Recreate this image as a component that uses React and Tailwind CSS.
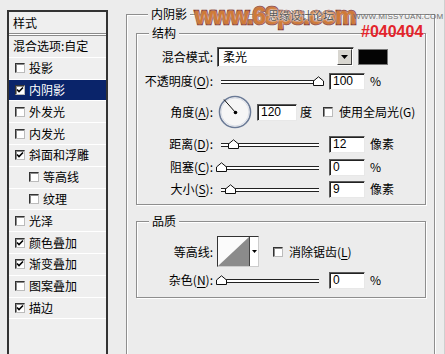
import React from 'react';

const cjk = "font-['Noto_Sans_CJK_SC','Liberation_Sans',sans-serif]";

// 复选框（经典 Windows 风格）
const Check = ({ on }) => (
  <span className="w-[10px] h-[10px] shrink-0 bg-white border border-[#333] border-b-[#bbb] border-r-[#bbb] shadow-[inset_1px_1px_0_#8a8a8a] flex items-center justify-center">
    {on && (
      <svg width="8" height="8" viewBox="0 0 8 8">
        <path d="M1 3.5 L3 5.5 L7 1.5" fill="none" stroke="#000" strokeWidth="1.6" />
      </svg>
    )}
  </span>
);

const styles = [
  { label: '投影', on: false },
  { label: '内阴影', on: true, active: true },
  { label: '外发光', on: false },
  { label: '内发光', on: false },
  { label: '斜面和浮雕', on: true },
  { label: '等高线', on: false, indent: true },
  { label: '纹理', on: false, indent: true },
  { label: '光泽', on: false },
  { label: '颜色叠加', on: true },
  { label: '渐变叠加', on: true },
  { label: '图案叠加', on: false },
  { label: '描边', on: true },
];

const Slider = ({ pos }) => (
  <div className="relative w-[102px] h-[10px] shrink-0">
    <div className="absolute left-[4px] right-0 top-[4px] h-[4px] bg-white border-y border-[#222]" />
    <svg className="absolute top-0" style={{ left: pos - 5 }} width="11" height="10" viewBox="0 0 11 10">
      <path d="M0.5 9.5 V5 L5.5 0.8 L10.5 5 V9.5 Z" fill="#fff" stroke="#111" strokeWidth="1" />
    </svg>
  </div>
);

const Field = ({ value, w = 'w-[36px]' }) => (
  <div className={`${w} h-[17px] shrink-0 bg-white border border-[#5a5a5a] border-b-[#e8e8e8] border-r-[#e8e8e8] shadow-[inset_1px_1px_0_#222] pl-[3px] text-[12px] leading-[15px] font-['Liberation_Sans',sans-serif] text-black`}>
    {value}
  </div>
);

const Label = ({ children }) => (
  <span className={`w-[76px] shrink-0 text-right text-[12px] leading-[14px] text-black ${cjk}`}>{children}</span>
);

const U = ({ children }) => <span className="underline underline-offset-2">{children}</span>;

const SliderRow = ({ label, pos, value, unit, className }) => (
  <div className={`flex items-center h-[18px] ${className}`}>
    <Label>{label}</Label>
    <div className="ml-[4px]">
      <Slider pos={pos} />
    </div>
    <div className="ml-[10px]">
      <Field value={value} />
    </div>
    <span className={`ml-[5px] text-[12px] leading-[14px] ${cjk}`}>{unit}</span>
  </div>
);

const Group = ({ title, className, children }) => (
  <fieldset className={`border border-[#8e8e8e] shadow-[inset_1px_1px_0_#fff,1px_1px_0_#fff] ${className}`}>
    <legend className={`ml-[12px] px-[3px] bg-[#ececec] text-[12px] leading-[14px] text-black ${cjk}`}>{title}</legend>
    {children}
  </fieldset>
);

export default function App() {
  return (
    <div className="relative w-[445px] h-[354px] overflow-hidden bg-[#ececec] flex pt-[7px] pl-[7px] border-r border-[#cfcfcf]">
      {/* 左侧样式列表 */}
      <div className="mt-[3px] w-[101px] h-[360px] shrink-0 border-2 border-[#333] bg-[#efefef] flex flex-col">
        <div className={`h-[21px] pl-[4px] flex items-center text-[12px] ${cjk}`}>样式</div>
        <div className="h-[3px] border-y border-[#8a8a8a] bg-white" />
        <div className={`h-[21.8px] pl-[4px] flex items-center border-b border-white text-[12px] ${cjk}`}>混合选项:自定</div>
        {styles.map((s) => (
          <div
            key={s.label}
            className={`h-[21.8px] flex items-center border-b border-white text-[12px] ${cjk} ${s.indent ? 'pl-[20px]' : 'pl-[6px]'} ${s.active ? 'bg-[#0a246a] text-white' : 'text-black'}`}
          >
            <Check on={s.on} />
            <span className="ml-[4px]">{s.label}</span>
          </div>
        ))}
      </div>

      {/* 右侧设置 */}
      <Group title="内阴影" className="ml-[18px] w-[309px] h-[380px] pt-[5px] pl-[9px] pr-[8px]">
        <Group title="结构" className="pb-[6px]">
          {/* 混合模式 */}
          <div className="flex items-center h-[20px] mt-[7px]">
            <Label>混合模式:</Label>
            <div className="ml-[4px] w-[137px] h-[20px] bg-white border border-[#5a5a5a] border-b-[#e8e8e8] border-r-[#e8e8e8] shadow-[inset_1px_1px_0_#222] flex items-center">
              <span className={`flex-1 pl-[5px] text-[12px] leading-[14px] ${cjk}`}>柔光</span>
              <div className="w-[15px] h-[16px] mr-[1px] bg-[#d8d6d0] border border-[#fff] border-b-[#404040] border-r-[#404040] flex items-center justify-center">
                <svg width="7" height="4" viewBox="0 0 7 4"><path d="M0 0 H7 L3.5 4 Z" fill="#000" /></svg>
              </div>
            </div>
            <div className="ml-[4px] w-[30px] h-[16px] bg-[#040404] border border-[#777]" />
          </div>

          <SliderRow className="mt-[5px]" label={<>不透明度(<U>O</U>):</>} pos={101} value="100" unit="%" />

          {/* 角度 */}
          <div className="flex items-center h-[34px] mt-[5px]">
            <Label>角度(<U>A</U>):</Label>
            <svg className="ml-[5px] shrink-0" width="34" height="34" viewBox="0 0 34 34">
              <circle cx="17" cy="17" r="15.5" fill="#f6f6f6" stroke="#6a7a96" strokeWidth="1.6" />
              <circle cx="17" cy="17" r="14" fill="none" stroke="#d9dde6" strokeWidth="1" />
              <line x1="17.5" y1="17.5" x2="6" y2="4.5" stroke="#111" strokeWidth="1" />
              <circle cx="17.5" cy="17.5" r="1.8" fill="#000" />
            </svg>
            <div className="ml-[5px]">
              <Field value="120" w="w-[40px]" />
            </div>
            <span className={`ml-[3px] text-[12px] leading-[14px] ${cjk}`}>度</span>
            <span className="ml-[11px]">
              <Check on={false} />
            </span>
            <span className={`ml-[6px] text-[12px] leading-[14px] ${cjk}`}>使用全局光(G)</span>
          </div>

          <SliderRow className="mt-[6px]" label={<>距离(<U>D</U>):</>} pos={16} value="12" unit="像素" />
          <SliderRow className="mt-[5px]" label={<>阻塞(<U>C</U>):</>} pos={4} value="0" unit="%" />
          <SliderRow className="mt-[4px]" label={<>大小(<U>S</U>):</>} pos={13} value="9" unit="像素" />
        </Group>

        <Group title="品质" className="mt-[9px] pb-[8px]">
          <div className="flex items-center h-[31px] mt-[8px]">
            <Label>等高线:</Label>
            <div className="ml-[4px] w-[42px] h-[31px] flex border border-[#333] border-b-[#ccc] border-r-[#ccc] bg-white">
              <svg width="31" height="29" viewBox="0 0 31 29" className="shrink-0">
                <rect width="31" height="29" fill="#fbfbfb" />
                <path d="M0 29 L31 0 L31 29 Z" fill="#8b8b8b" />
              </svg>
              <div className="flex-1 border-l border-[#444] flex items-center justify-center">
                <svg width="5" height="3" viewBox="0 0 5 3"><path d="M0 0 H5 L2.5 3 Z" fill="#000" /></svg>
              </div>
            </div>
            <span className="ml-[14px]">
              <Check on={false} />
            </span>
            <span className={`ml-[6px] text-[12px] leading-[14px] ${cjk}`}>消除锯齿(<U>L</U>)</span>
          </div>
          <SliderRow className="mt-[4px]" label={<>杂色(<U>N</U>):</>} pos={4} value="0" unit="%" />
        </Group>
      </Group>

      {/* 水印与标注 */}
      <span className="absolute left-[195px] top-[1px] text-[24px] font-bold tracking-[-1px] leading-[30px] text-[#cf7a38] font-['Liberation_Sans',sans-serif] [-webkit-text-stroke:2.5px_#7b2412] [paint-order:stroke_fill] [text-shadow:0_0_3px_#fff]">
        www.68ps.com
      </span>
      <span className={`absolute left-[268px] top-[9px] text-[11px] leading-[13px] text-[#555] ${cjk} [text-shadow:0_0_2px_#fff,0_0_2px_#fff]`}>
        思缘设计论坛
      </span>
      <span className="absolute left-[353px] top-[12px] text-[8px] leading-[10px] text-[#6f6f6f] tracking-[0.2px] font-['Liberation_Sans',sans-serif]">
        WWW.MISSYUAN.COM
      </span>
      <span className="absolute left-[361px] top-[23px] text-[16px] font-bold leading-[18px] text-[#e3242b] font-['Liberation_Sans',sans-serif]">
        #040404
      </span>
    </div>
  );
}
